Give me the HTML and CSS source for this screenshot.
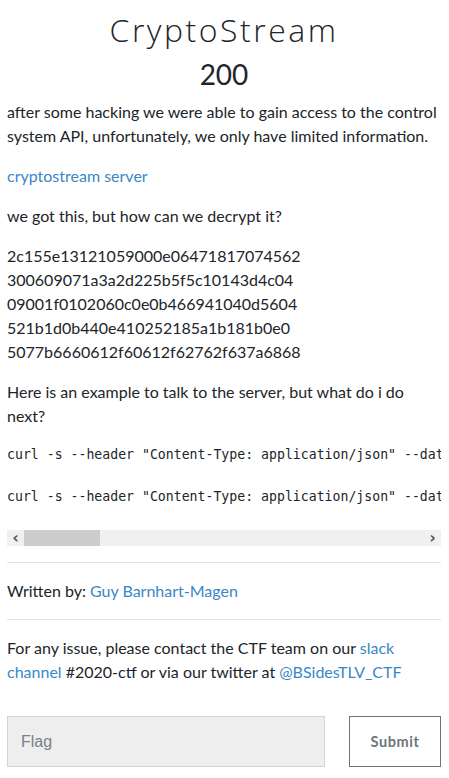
FILE: index.html
```html
<!DOCTYPE html>
<html>
<head>
<meta charset="utf-8">
<link rel="stylesheet" href="styles.css">
</head>
<body>
<div class="challenge">
  <h2 class="title">CryptoStream</h2>
  <h3 class="points">200</h3>
  <div class="desc">
    <p>after some hacking we were able to gain access to the control system API, unfortunately, we only have limited information.</p>
    <p><a href="#">cryptostream server</a></p>
    <p>we got this, but how can we decrypt it?</p>
    <p>2c155e13121059000e06471817074562<br>300609071a3a2d225b5f5c10143d4c04<br>09001f0102060c0e0b466941040d5604<br>521b1d0b440e410252185a1b181b0e0<br>5077b6660612f60612f62762f637a6868</p>
    <p>Here is an example to talk to the server, but what do i do next?</p>
    <div class="codebox">
      <pre class="code">curl -s --header "Content-Type: application/json" --data '{"cmd":"status"}' http://cryptostream.ctf.bsidestlv.com/api

curl -s --header "Content-Type: application/json" --data '{"cmd":"data"}' http://cryptostream.ctf.bsidestlv.com/api
</pre>
      <div class="scrollbar">
        <span class="arrow">&#x2039;</span>
        <span class="track"><span class="thumb"></span></span>
        <span class="arrow">&#x203A;</span>
      </div>
    </div>
  </div>
  <hr>
  <p>Written by: <a href="#">Guy Barnhart-Magen</a></p>
  <hr>
  <p>For any issue, please contact the CTF team on our <a href="#">slack channel</a> #2020-ctf or via our twitter at <a href="#">@BSidesTLV_CTF</a></p>
  <form class="submit-row">
    <input class="flag" type="text" placeholder="Flag">
    <button class="btn" type="button">Submit</button>
  </form>
</div>
</body>
</html>
```
FILE: styles.css
```css
html, body {
  margin: 0;
  padding: 0;
  background: #fff;
}
body {
  font-family: Lato, "Open Sans", sans-serif;
  font-size: 16px;
  line-height: 24px;
  color: #212529;
}
.challenge {
  padding: 11px 8px 0 7px;
}
.title {
  font-family: "Open Sans", sans-serif;
  font-weight: 300;
  font-size: 32px;
  letter-spacing: 2.5px;
  line-height: 38px;
  text-align: center;
  margin: 0;
  color: #212529;
}
.points {
  font-family: Lato, sans-serif;
  font-weight: 400;
  font-size: 28px;
  line-height: 34px;
  text-align: center;
  margin: 8px 0 0 0;
}
p {
  margin: 0 0 16px 0;
}
.desc {
  margin-top: 9px;
}
a {
  color: #3a87c8;
  text-decoration: none;
}
.codebox {
  margin-bottom: 16px;
}
.code {
  font-family: "DejaVu Sans Mono", monospace;
  font-size: 13.2px;
  line-height: 21px;
  margin: 0;
  overflow: hidden;
  white-space: pre;
  color: #212529;
  height: 86px;
}
.scrollbar {
  display: flex;
  align-items: center;
  height: 16px;
  background: #f0f0f0;
  color: #505050;
}
.arrow {
  width: 17px;
  text-align: center;
  font-family: "DejaVu Sans", sans-serif;
  font-size: 15px;
  font-weight: bold;
  line-height: 16px;
}
.track {
  flex: 1;
  height: 16px;
  display: flex;
}
.thumb {
  width: 76px;
  height: 16px;
  background: #cdcdcd;
}
hr {
  border: 0;
  border-top: 1px solid #e3e3e3;
  margin: 16px 0;
  height: 0;
}
.submit-row {
  display: flex;
  gap: 24px;
  margin-top: 32px;
}
.flag {
  width: 318px;
  height: 51px;
  box-sizing: border-box;
  border: 1px solid #ced4da;
  background: #eeeeee;
  padding: 0 13px;
  font-family: "Liberation Sans", Arial, sans-serif;
  font-size: 16px;
  color: #495057;
  margin: 0;
}
.flag::placeholder {
  color: #7a8188;
}
.btn {
  width: 92px;
  height: 51px;
  box-sizing: border-box;
  border: 1px solid #6c757d;
  background: #fff;
  color: #6c757d;
  font-family: Lato, sans-serif;
  font-weight: 700;
  font-size: 14.5px;
  letter-spacing: 0.6px;
  margin: 0;
  padding: 0;
}
```
